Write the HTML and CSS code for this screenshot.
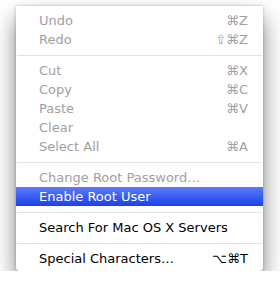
FILE: index.html
```html
<!DOCTYPE html>
<html lang="en">
<head>
  <meta charset="UTF-8" />
  <title>Edit Menu</title>
  <link rel="stylesheet" href="styles.css">
</head>
<body>
  <div class="menu">
    <div class="item disabled"><span>Undo</span><span class="key">⌘Z</span></div>
    <div class="item disabled"><span>Redo</span><span class="key">⇧⌘Z</span></div>
    <div class="sep"></div>
    <div class="item disabled"><span>Cut</span><span class="key">⌘X</span></div>
    <div class="item disabled"><span>Copy</span><span class="key">⌘C</span></div>
    <div class="item disabled"><span>Paste</span><span class="key">⌘V</span></div>
    <div class="item disabled"><span>Clear</span></div>
    <div class="item disabled"><span>Select All</span><span class="key">⌘A</span></div>
    <div class="sep"></div>
    <div class="item disabled"><span>Change Root Password…</span></div>
    <div class="item selected"><span>Enable Root User</span></div>
    <div class="sep"></div>
    <div class="item"><span>Search For Mac OS X Servers</span></div>
    <div class="sep"></div>
    <div class="item"><span>Special Characters…</span><span class="key">⌥⌘T</span></div>
  </div>
</body>
</html>
```

FILE: styles.css
```css
* {
  box-sizing: border-box;
}

body {
  margin: 0;
  background: #fff;
  font-family: 'DejaVu Sans', sans-serif;
  font-size: 13px;
}

.menu {
  width: 247px;
  margin: 6px 0 0 16px;
  padding: 5px 0 3px;
  background: #fff;
  border-radius: 0 0 4px 4px;
  box-shadow: 0 12px 22px rgba(0, 0, 0, 0.5), 0 0 3px rgba(0, 0, 0, 0.25);
}

.item {
  display: flex;
  justify-content: space-between;
  align-items: center;
  height: 19px;
  padding: 0 15px 0 23px;
  color: #000;
}

.item.disabled {
  color: #a0a0a0;
}

.item.selected {
  color: #fff;
  background: linear-gradient(#5d7cf6, #1a40ec);
}

.sep {
  height: 1px;
  margin: 6px 1px 5px;
  background: #e2e2e2;
}
```
